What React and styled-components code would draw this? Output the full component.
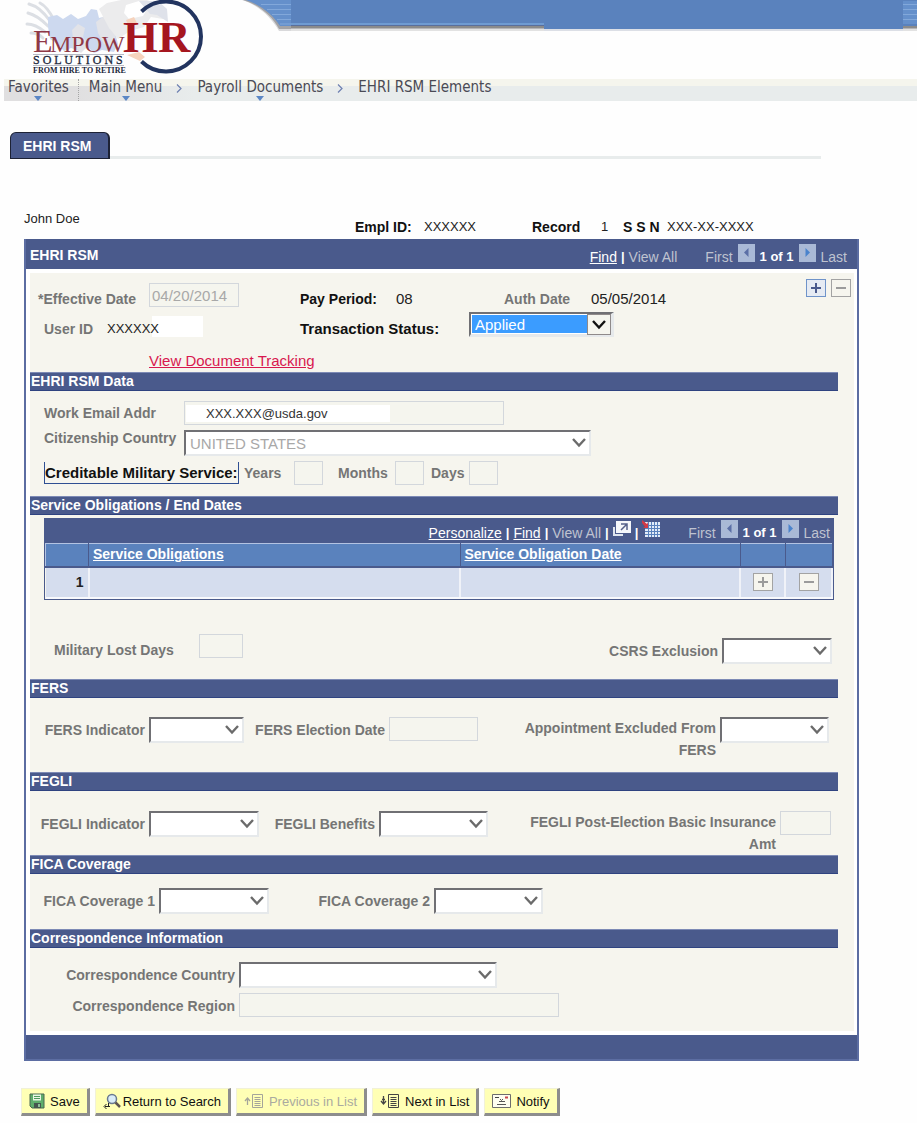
import React from "react";
import styled, { createGlobalStyle } from "styled-components";

const GlobalStyle = createGlobalStyle`
  * {
    box-sizing: border-box;
  }

  body {
    margin: 0;
    background: #fefefe;
    color: #222;
    font-family: "Liberation Sans", Arial, sans-serif;
    font-size: 13px;
    line-height: 16px;
  }
`;

const Header = styled.header`
  display: flex;
  align-items: flex-start;
  height: 79px;
`;

const LogoLink = styled.a`
  display: block;
  flex: none;
  margin-left: 24px;
`;

const BannerCurve = styled.svg`
  display: block;
  flex: none;
  margin-left: 22px;
`;

const Banner = styled.div`
  flex: 1;
  display: flex;
  height: 31px;
`;

const BannerPart = styled.div`
  flex: ${props => props.$grow || "none"};
  width: ${props => props.$width || "auto"};
  height: 31px;
  background: ${props =>
    props.$striped
      ? "linear-gradient(#5a82bd 0 1px, transparent 1px 24px, #5a82bd 24px 26px, #8b8b8b 26px 28px, #b5b5b8 28px 29px, #e2e2e2 29px 31px), repeating-linear-gradient(#6590cb 0 4px, #82a8da 4px 5px)"
      : props.$shadow
      ? "linear-gradient(#5a82bd 0 23px, #6f9bd2 23px 25px, #5a6f9c 25px 26px, #8b8b8b 26px 28px, #b5b5b8 28px 29px, #e2e2e2 29px 31px)"
      : "linear-gradient(#5a82bd 0 29px, #dcdfe6 29px 31px)"};
`;

const Breadcrumbs = styled.nav`
  display: flex;
  align-items: flex-start;
  height: 22px;
  margin-left: 4px;
  padding-left: 4px;
  background: linear-gradient(
      to right,
      #e0dfe0 0 70px,
      rgba(224, 223, 224, 0) 190px
    )
    0 7px no-repeat,
    linear-gradient(#f5f5ed 0 7px, #e8ecec 7px 22px);
`;

const Crumb = styled.a`
  position: relative;
  color: #4a4a55;
  font-family: "DejaVu Sans Condensed", "DejaVu Sans", sans-serif;
  font-size: 15px;
  line-height: 17px;
  white-space: nowrap;
  text-decoration: none;
`;

const CrumbArrow = styled.svg`
  position: absolute;
  left: 50%;
  bottom: -5px;
  margin-left: -4px;
`;

const Divider = styled.span`
  height: 22px;
  margin: 0 10px 0 9px;
  border-left: 1px dotted #a5a5a5;
`;

const Chevron = styled.svg`
  margin: 5px 15px 0 14px;
`;

const Tabs = styled.div`
  display: flex;
  margin: 31px 96px 0 10px;
  height: 27px;
  border-bottom: 3px solid #e8ecec;
`;

const Tab = styled.button`
  height: 27px;
  padding: 0 17px 0 12px;
  border: 1px solid #1d2235;
  border-right-width: 2px;
  border-radius: 6px 6px 0 0;
  background: #4a5a8c;
  color: #fff;
  font: bold 14px "Liberation Sans", Arial, sans-serif;
`;

const Page = styled.main`
  margin: 52px 58px 0 24px;
`;

const Identity = styled.div`
  display: grid;
  grid-template-columns: 331px 69px 108px 69px 22px 44px auto;
  align-items: end;
  height: 28px;
  padding-bottom: 4px;
  white-space: nowrap;

  & > :first-child {
    align-self: start;
  }
`;

const Strong = styled.b`
  color: #111;
  font-size: 14px;
  white-space: nowrap;
`;

const Panel = styled.section`
  border: 2px solid #5c6da2;
  border-top-width: 0;
  background: #fff;
`;

const PanelTitle = styled.div`
  display: flex;
  justify-content: space-between;
  height: 30px;
  padding: 5px 10px 0 4px;
  background: #4a5a8c;
`;

const PanelHeading = styled.h1`
  margin: 0;
  color: #fff;
  font-size: 14px;
  line-height: 22px;
`;

const PanelBody = styled.div`
  margin: 4px 3px 4px 4px;
  background: #f6f5ee;
`;

const PanelFooter = styled.div`
  height: 24px;
  background: #4a5a8c;
`;

const BarTools = styled.div`
  display: flex;
  align-items: flex-start;
  gap: 4px;
  color: #fff;
  line-height: 26px;
  white-space: nowrap;
`;

const BarLink = styled.a`
  color: #fff;
  font-size: 14px;
`;

const Muted = styled.span`
  color: #bfc3d0;
  font-size: 14px;
`;

const Pager = styled.div`
  display: flex;
  align-items: flex-start;
  gap: 5px;
  margin-left: 24px;
`;

const IconButton = styled.button`
  display: block;
  padding: 0;
  border: 0;
  background: none;
  line-height: 0;
`;

const SquareButton = styled.button`
  display: inline-flex;
  align-items: center;
  justify-content: center;
  width: 20px;
  height: 18px;
  padding: 0;
  border: 1px solid ${props => (props.$active ? "#6f93c9" : "#a3a3a3")};
  background: ${props => (props.$active ? "#e6ebf3" : "#f6f5ee")};
  color: ${props => (props.$active ? "#4a5a8c" : "#9b9b9b")};
  vertical-align: middle;
`;

const TopBlock = styled.div`
  display: flex;
  justify-content: space-between;
  height: 99px;
`;

const Actions = styled.div`
  display: flex;
  gap: 5px;
  margin: 6px 3px;
`;

const SectionTitle = styled.h2`
  height: 19px;
  margin: 0 16px 0 0;
  padding-left: 1px;
  border-top: 1px solid #7d8ab5;
  border-bottom: 1px solid #2f4380;
  background: #4a5a8c;
  color: #fff;
  font-size: 14px;
  line-height: 17px;
`;

const Fields = styled.div`
  display: flex;
  flex-direction: column;
  gap: 5px;
  padding: ${props => props.$pad || "0"};
`;

const Row = styled.div`
  display: grid;
  grid-template-columns: ${props => props.$cols};
  align-items: ${props => props.$align || "center"};
`;

const Label = styled.label`
  color: ${props => (props.$dark ? "#111" : "#757575")};
  font-size: ${props => (props.$dark ? "15px" : "14px")};
  font-weight: bold;
  white-space: nowrap;
`;

const FormGrid = styled.div`
  display: grid;
  grid-template-columns: ${props => props.$cols};
  column-gap: 4px;
  row-gap: 5px;
  padding: ${props => props.$pad};

  ${Label} {
    justify-self: end;
    line-height: 26px;
  }
`;

const WrapLabel = styled(Label)`
  && {
    max-width: ${props => props.$max};
    line-height: 22px;
    text-align: right;
    white-space: normal;
  }
`;

const TextBox = styled.input`
  width: ${props => props.$width || "100%"};
  height: 24px;
  padding: 0 2px;
  border: 1px solid #d3d7dc;
  border-radius: 0;
  background: #f5f5ee;
  color: #a8a8a8;
  font: 15px "Liberation Sans", Arial, sans-serif;
`;

const EmailBox = styled(TextBox)`
  padding-left: 21px;
  background: linear-gradient(#fff, #fff) 1px 3px / 204px 17px no-repeat #f5f5ee;
  color: #333;
  font-size: 13px;
`;

const SelectWrap = styled.div`
  position: relative;
  width: ${props => props.$width || "100%"};
`;

const SelectBox = styled.select`
  display: block;
  width: 100%;
  height: 26px;
  padding: 0 24px 0 4px;
  appearance: none;
  border: 2px solid #707074;
  border-right-color: #e6e9eb;
  border-bottom-color: #e6e9eb;
  border-radius: 0;
  background: #fff;
  color: #a8a8a8;
  opacity: 1;
  font: 15px "Liberation Sans", Arial, sans-serif;
`;

const ActiveSelect = styled(SelectBox)`
  height: 25px;
  border-right-width: 3px;
  border-bottom-width: 3px;
  box-shadow: inset 0 0 0 1px #fff;
  background: #3b9cff;
  color: #fff;
`;

const Caret = styled.svg`
  position: absolute;
  top: 8px;
  right: 5px;
  pointer-events: none;
`;

const DropButton = styled.span`
  position: absolute;
  top: 2px;
  right: 3px;
  display: flex;
  align-items: center;
  justify-content: center;
  width: 24px;
  height: 21px;
  border: 1px solid #8f8a8a;
  background: #f5f5ee;
  pointer-events: none;
`;

const Value = styled.span`
  color: #222;
  font-size: 15px;
`;

const UserValue = styled.span`
  width: 96px;
  height: 21px;
  padding-top: 5px;
  background: linear-gradient(to right, transparent 45px, #fff 45px);
`;

const TrackingLink = styled.a`
  align-self: flex-start;
  margin: 11px 0 0 111px;
  color: #d8184f;
  font-size: 15px;
`;

const Boxed = styled.b`
  justify-self: start;
  padding: 1px 0 0;
  border: 1px solid #2f4f93;
  border-top: 0;
  color: #111;
  font-size: 15px;
  line-height: 20px;
`;

const GridArea = styled.div`
  margin: 3px 20px 0 14px;
  border: 1px solid #4a5a8c;
`;

const GridBar = styled.div`
  display: flex;
  justify-content: flex-end;
  height: 24px;
  padding: 1px 3px 0 0;
  background: #4a5a8c;
`;

const Table = styled.table`
  width: 100%;
  table-layout: fixed;
  border-collapse: collapse;
`;

const Th = styled.th`
  width: ${props => props.$width};
  height: 23px;
  padding: 0 4px;
  border: 1px solid #b3c3e2;
  border-bottom: 2px solid #4a5a8c;
  border-right-color: #4a5a8c;
  background: #5a82bd;
  text-align: left;

  a {
    color: #fff;
    font-size: 14px;
  }
`;

const Td = styled.td`
  height: 31px;
  padding: 0 4px;
  border-right: 2px solid #f0f2f8;
  border-bottom: 2px solid #f8f9fc;
  background: #d5ddee;
  color: #222;
  font-weight: bold;
  font-size: 14px;
  text-align: ${props => props.$align || "left"};
`;

const SplitRow = styled.div`
  display: flex;
  justify-content: space-between;
  height: 30px;
  margin: 34px 22px 15px 24px;
`;

const Pair = styled.div`
  display: flex;
  align-items: ${props => props.$align || "center"};
  align-self: ${props => props.$self};
  gap: ${props => props.$gap};
`;

const Toolbar = styled.div`
  display: flex;
  gap: 5px;
  margin: 27px 0 0 21px;
`;

const ToolButton = styled.button`
  display: flex;
  align-items: center;
  gap: ${props => props.$gap || "5px"};
  height: 28px;
  padding: 1px 7px 0 7px;
  border: 1px solid #f1f1d8;
  border-right: 3px solid #8d8d8d;
  border-bottom: 3px solid #8d8d8d;
  background: #ffffb5;
  color: #111;
  font: 13px "Liberation Sans", Arial, sans-serif;
  white-space: nowrap;

  &:disabled {
    color: #aaaaa0;
  }
`;

function Logo() {
  return (
    <svg width="196" height="78" viewBox="24 0 196 78" role="img" aria-label="EmpowHR Solutions">
      <g fill="none" stroke="#dcdfe4" strokeWidth="3" strokeLinecap="round">
        <path d="M29 4c8 2 14 7 21 17" />
        <path d="M28 13c8 2 13 6 20 13" />
        <path d="M27 24c7 0 12 3 18 8" />
        <path d="M31 33c5 0 9 2 12 5" />
        <path d="M40 3c6 3 10 9 14 17" />
      </g>
      <path
        d="M48 17l9-2 6 4 8-5 7 5 8-3 5-7 6 1 2 8 8-2 7-6 6 2 1 12-6 8 3 12-4 8-12-2-8 3-6-6-8 4-9-3-7 3-8-8-6-4-2-12z"
        fill="#cdd9ef"
      />
      <path
        d="M72 30l6-6 7 4-2 9 6 8-8 8-7-6zM96 22l8-6 9 4 4 12-5 15-8-3-6-11z"
        fill="#e2e3e8"
      />
      <path d="M99 9l8-6 14-3h26l14 6 2 13-12-2-7 10-14 4-12 8-9-11z" fill="#ececed" />
      <path d="M126 5l13-4 9 6-5 9-14 3-5-6z" fill="#fff" />
      <path d="M139 1h19l9 8 1 13-11-7-7-1z" fill="#dfe2ea" />
      <path d="M126 20l8-3 3 6-8 4zM127 55l12-3 6 5-5 4z" fill="#f6d3bd" />
      <path
        d="M141.500 11.500A35 35 0 1 1 141.500 61.500"
        fill="none"
        stroke="#22345f"
        strokeWidth="4"
      />
      <path d="M33 54.500h91M33 65.500h91" stroke="#b7bac4" strokeWidth="1" />
      <g fontFamily="Liberation Serif, Times New Roman, serif">
        <text x="33" y="52" fontSize="32" fill="#8f3846">
          E
        </text>
        <text x="50" y="52" fontSize="24" fill="#8f3846">
          MPOW
        </text>
        <text x="123" y="52" fontSize="45" fontWeight="bold" fill="#a5161f">
          HR
        </text>
        <text x="33" y="64" fontSize="12" fill="#22283c" stroke="#22283c" strokeWidth=".3">
          S O L U T I O N S
        </text>
        <text x="33" y="73" fontSize="8" fontWeight="bold" fill="#22283c">
          FROM HIRE TO RETIRE
        </text>
      </g>
    </svg>
  );
}

function MenuCrumb({ children }) {
  return (
    <Crumb href="#">
      {children}
      <CrumbArrow width="8" height="5">
        <path d="M0 0h8L4 5z" fill="#5a86c5" />
      </CrumbArrow>
    </Crumb>
  );
}

function Separator() {
  return (
    <Chevron width="6" height="9">
      <path d="M1 0.500L5 4.500 1 8.500" fill="none" stroke="#6c7fb0" strokeWidth="1.200" />
    </Chevron>
  );
}

function CaretIcon({ color = "#6b6b6b" }) {
  return <path d="M1 1L7 7.500 13 1" fill="none" stroke={color} strokeWidth="2.400" />;
}

function Select({ id, width, children, disabled }) {
  return (
    <SelectWrap $width={width}>
      <SelectBox id={id} disabled={disabled}>
        {children || <option value="" />}
      </SelectBox>
      <Caret width="14" height="10">
        <CaretIcon />
      </Caret>
    </SelectWrap>
  );
}

function PageNav() {
  return (
    <Pager>
      <Muted>First</Muted>
      <IconButton aria-label="Previous row">
        <svg width="17" height="18">
          <path d="M0 0h17v18H0z" fill="#a9b9d6" />
          <path d="M10.500 4v9L6 8.500z" fill="#5b6fa6" />
        </svg>
      </IconButton>
      <b>1 of 1</b>
      <IconButton aria-label="Next row">
        <svg width="17" height="18">
          <path d="M0 0h17v18H0z" fill="#a9b9d6" />
          <path d="M6.500 4v9L11 8.500z" fill="#4a83cc" />
        </svg>
      </IconButton>
      <Muted>Last</Muted>
    </Pager>
  );
}

function PlusMinus({ plus, active, label }) {
  return (
    <SquareButton $active={active} aria-label={label}>
      <svg width="10" height="10">
        <path
          d={plus ? "M0 5h10M5 0v10" : "M0 5h10"}
          stroke="currentColor"
          strokeWidth="2"
        />
      </svg>
    </SquareButton>
  );
}

function ListIcon({ down, muted }) {
  const color = muted ? "#a5a59a" : "#444";
  return (
    <svg width="20" height="16" fill="none" stroke={color}>
      <path
        d={down ? "M3.500 3v8M1 8l2.500 3L6 8M2 6.500h3" : "M3.500 12V5M1 8l2.500-3L6 8"}
        strokeWidth="1.300"
      />
      <path d="M8.500 1.500h10v13h-10zM10.500 4.500h6M10.500 6.500h6M10.500 8.500h6M10.500 10.500h6M10.500 12.500h6" />
    </svg>
  );
}

export default function App() {
  return (
    <>
      <GlobalStyle />
      <Header>
        <LogoLink href="#">
          <Logo />
        </LogoLink>
        <BannerCurve width="49" height="31">
          <path d="M0 0C16 5 29 17 37 31H49V0z" fill="#d9d9db" />
          <path d="M1 0C17 5 30 16 37 29H49V0z" fill="#a3a3a6" />
          <path d="M4 0C19 5 31 15 38 26H49V0z" fill="#6590cb" />
          <path d="M19 4.500h30M25 9.500h24M30 14.500h19M35 19.500h14M38 24h11" stroke="#82a8da" />
        </BannerCurve>
        <Banner>
          <BannerPart $shadow $width="253px" />
          <BannerPart $grow="1" />
          <BannerPart $striped $width="14px" />
        </Banner>
      </Header>

      <Breadcrumbs>
        <MenuCrumb>Favorites</MenuCrumb>
        <Divider />
        <MenuCrumb>Main Menu</MenuCrumb>
        <Separator />
        <MenuCrumb>Payroll Documents</MenuCrumb>
        <Separator />
        <Crumb href="#">EHRI RSM Elements</Crumb>
      </Breadcrumbs>

      <Tabs>
        <Tab>EHRI RSM</Tab>
      </Tabs>

      <Page>
        <Identity>
          <span>John Doe</span>
          <Strong>Empl ID:</Strong>
          <span>XXXXXX</span>
          <Strong>Record</Strong>
          <span>1</span>
          <Strong>S S N</Strong>
          <span>XXX-XX-XXXX</span>
        </Identity>

        <Panel>
          <PanelTitle>
            <PanelHeading>EHRI RSM</PanelHeading>
            <BarTools>
              <BarLink href="#">Find</BarLink>
              <b>|</b>
              <Muted>View All</Muted>
              <PageNav />
            </BarTools>
          </PanelTitle>

          <PanelBody>
            <TopBlock>
              <Fields $pad="10px 0 0 8px">
                <Row $cols="111px 151px 96px 108px 87px auto" $align="end">
                  <Label htmlFor="effdt">*Effective Date</Label>
                  <TextBox id="effdt" $width="90px" defaultValue="04/20/2014" readOnly />
                  <Strong>Pay Period:</Strong>
                  <Value>08</Value>
                  <Label as="span">Auth Date</Label>
                  <Value>05/05/2014</Value>
                </Row>
                <Row $cols="6px 63px 193px 169px auto" $align="end">
                  <span />
                  <Label as="span">User ID</Label>
                  <UserValue>XXXXXX</UserValue>
                  <Label $dark htmlFor="status">
                    Transaction Status:
                  </Label>
                  <SelectWrap $width="145px">
                    <ActiveSelect id="status">
                      <option>Applied</option>
                    </ActiveSelect>
                    <DropButton>
                      <svg width="14" height="10">
                        <CaretIcon color="#111" />
                      </svg>
                    </DropButton>
                  </SelectWrap>
                </Row>
                <TrackingLink href="#">View Document Tracking</TrackingLink>
              </Fields>
              <Actions>
                <PlusMinus plus active label="Add row" />
                <PlusMinus label="Delete row" />
              </Actions>
            </TopBlock>

            <SectionTitle>EHRI RSM Data</SectionTitle>
            <Fields $pad="10px 0 11px 14px">
              <Row $cols="140px auto">
                <Label htmlFor="email">Work Email Addr</Label>
                <EmailBox id="email" $width="320px" defaultValue="XXX.XXX@usda.gov" readOnly />
              </Row>
              <Row $cols="140px auto" $align="start">
                <Label htmlFor="country">Citizenship Country</Label>
                <Select id="country" width="407px" disabled>
                  <option>UNITED STATES</option>
                </Select>
              </Row>
              <Row $cols="200px 50px 44px 57px 36px 38px auto">
                <Boxed>Creditable Military Service:</Boxed>
                <Label htmlFor="years">Years</Label>
                <TextBox id="years" $width="29px" />
                <Label htmlFor="months">Months</Label>
                <TextBox id="months" $width="29px" />
                <Label htmlFor="days">Days</Label>
                <TextBox id="days" $width="29px" />
              </Row>
            </Fields>

            <SectionTitle>Service Obligations / End Dates</SectionTitle>
            <GridArea>
              <GridBar>
                <BarTools>
                  <BarLink href="#">Personalize</BarLink>
                  <b>|</b>
                  <BarLink href="#">Find</BarLink>
                  <b>|</b>
                  <Muted>View All</Muted>
                  <b>|</b>
                  <IconButton aria-label="Open in new window">
                    <svg width="18" height="16">
                      <path d="M1 7v8h9" fill="none" stroke="#dfe5ee" strokeWidth="2" />
                      <path d="M3 1h15v12H3z" fill="#f4f6fa" />
                      <path
                        d="M8 4h6v6M13.500 4.500L8 10"
                        fill="none"
                        stroke="#56618a"
                        strokeWidth="1.500"
                      />
                    </svg>
                  </IconButton>
                  <b>|</b>
                  <IconButton aria-label="Download">
                    <svg width="18" height="18">
                      <path d="M3 2h15v15H3z" fill="#e3ecf8" />
                      <path
                        d="M6.500 2v15M9.500 2v15M12.500 2v15M15.500 2v15M3 5.500h15M3 8.500h15M3 11.500h15M3 14.500h15"
                        stroke="#5a82bd"
                      />
                      <path d="M0 0l5 4 1-2v6H1l2-1.500L0 3z" fill="#d33a45" />
                    </svg>
                  </IconButton>
                  <PageNav />
                </BarTools>
              </GridBar>
              <Table>
                <thead>
                  <tr>
                    <Th $width="43px" aria-label="Row" />
                    <Th>
                      <a href="#">Service Obligations</a>
                    </Th>
                    <Th $width="280px">
                      <a href="#">Service Obligation Date</a>
                    </Th>
                    <Th $width="45px" aria-label="Add" />
                    <Th $width="47px" aria-label="Delete" />
                  </tr>
                </thead>
                <tbody>
                  <tr>
                    <Td $align="right">1</Td>
                    <Td />
                    <Td />
                    <Td $align="center">
                      <PlusMinus plus label="Add obligation" />
                    </Td>
                    <Td $align="center">
                      <PlusMinus label="Delete obligation" />
                    </Td>
                  </tr>
                </tbody>
              </Table>
            </GridArea>
            <SplitRow>
              <Pair $self="flex-start" $align="flex-end" $gap="25px">
                <Label htmlFor="lost">Military Lost Days</Label>
                <TextBox id="lost" $width="44px" />
              </Pair>
              <Pair $self="flex-end" $gap="4px">
                <Label htmlFor="csrs">CSRS Exclusion</Label>
                <Select id="csrs" width="110px" />
              </Pair>
            </SplitRow>

            <SectionTitle>FERS</SectionTitle>
            <FormGrid $cols="115px 95px 137px 89px 1fr 109px" $pad="19px 25px 11px 0">
              <Label htmlFor="fers">FERS Indicator</Label>
              <Select id="fers" />
              <Label htmlFor="fersdate">FERS Election Date</Label>
              <TextBox id="fersdate" />
              <WrapLabel $max="210px" htmlFor="excluded">
                Appointment Excluded From FERS
              </WrapLabel>
              <Select id="excluded" />
            </FormGrid>

            <SectionTitle>FEGLI</SectionTitle>
            <FormGrid $cols="115px 110px 112px 109px 1fr 51px" $pad="20px 23px 0 0">
              <Label htmlFor="fegli">FEGLI Indicator</Label>
              <Select id="fegli" />
              <Label htmlFor="benefits">FEGLI Benefits</Label>
              <Select id="benefits" />
              <WrapLabel $max="260px" htmlFor="amount">
                FEGLI Post-Election Basic Insurance Amt
              </WrapLabel>
              <TextBox id="amount" />
            </FormGrid>

            <SectionTitle>FICA Coverage</SectionTitle>
            <FormGrid $cols="125px 110px 157px 109px" $pad="14px 0 15px">
              <Label htmlFor="fica1">FICA Coverage 1</Label>
              <Select id="fica1" />
              <Label htmlFor="fica2">FICA Coverage 2</Label>
              <Select id="fica2" />
            </FormGrid>

            <SectionTitle>Correspondence Information</SectionTitle>
            <FormGrid $cols="205px 320px" $pad="14px 0 12px">
              <Label htmlFor="corcountry">Correspondence Country</Label>
              <Select id="corcountry" width="258px" />
              <Label htmlFor="region">Correspondence Region</Label>
              <TextBox id="region" />
            </FormGrid>
          </PanelBody>
          <PanelFooter />
        </Panel>
      </Page>

      <Toolbar>
        <ToolButton>
          <svg width="16" height="16">
            <path d="M1 1h14v14H3l-2-2z" fill="#5fae6c" stroke="#4a6650" />
            <path d="M4 1.500h8v6H4z" fill="#e9f5e4" />
            <path d="M5 3.500h6M5 5.500h6" stroke="#4f9a5e" />
            <path d="M5 10h7v5H5z" fill="#46564f" />
            <path d="M9 11h2v3H9z" fill="#8fbf98" />
          </svg>
          Save
        </ToolButton>
        <ToolButton $gap="2px">
          <svg width="18" height="16" fill="none">
            <circle cx="9" cy="6" r="4.500" fill="#d9ecf8" stroke="#69788f" strokeWidth="1.500" />
            <path d="M12.500 9.500L17 14" stroke="#5d5550" strokeWidth="2.500" />
            <path d="M7 13.500H2M3.500 11L1 13.500 3.500 16M5.500 10v3.500" stroke="#222" />
          </svg>
          Return to Search
        </ToolButton>
        <ToolButton disabled>
          <ListIcon muted />
          Previous in List
        </ToolButton>
        <ToolButton>
          <ListIcon down />
          Next in List
        </ToolButton>
        <ToolButton>
          <svg width="19" height="16" fill="none">
            <path d="M.5 1.500h18v13H.5z" fill="#fdfdf0" stroke="#6d6d6d" />
            <path d="M3 4.500h4" stroke="#444" />
            <path d="M13 4.500h3" stroke="#c8474d" strokeWidth="2" />
            <path d="M7 8.500h6M5 11.500h9M8 6l1.500 1.500L11 6" stroke="#555" />
          </svg>
          Notify
        </ToolButton>
      </Toolbar>
    </>
  );
}
